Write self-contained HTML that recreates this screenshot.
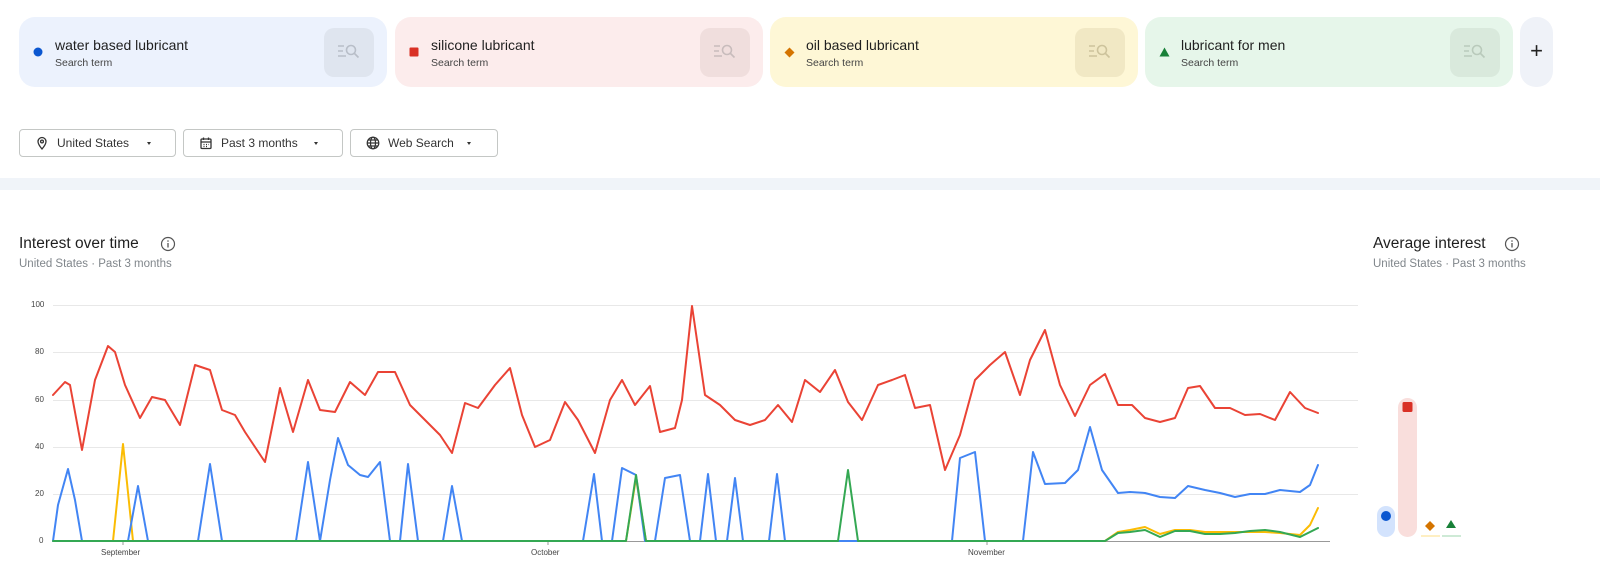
<!DOCTYPE html>
<html><head><meta charset="utf-8"><style>
*{box-sizing:border-box;margin:0;padding:0}
body{width:1600px;height:587px;background:#fff;font-family:"Liberation Sans",Arial,sans-serif;position:relative;overflow:hidden;color:#1f1f1f}
.card{position:absolute;top:17px;height:70px;width:368px;border-radius:16px}
.card .t{position:absolute;left:36px;top:20px;font-size:14px;color:#1f1f1f}
.card .s{position:absolute;left:36px;top:40px;font-size:10.5px;color:#444}
.card .mk{position:absolute;left:14px;top:30px}
.card .ib{position:absolute;right:13px;top:11px;width:50px;height:49px;border-radius:10px}
.card .ib svg{position:absolute;left:13px;top:13px}
.plus{position:absolute;left:1520px;top:17px;width:33px;height:70px;border-radius:16px;background:#eff2f8;font-size:22px;text-align:center;line-height:68px;color:#222}
.f{position:absolute;top:129px;height:28px;border:1px solid #c4c7c5;border-radius:4px;font-size:12px;color:#333;line-height:26px}
.f svg{position:absolute;left:15px;top:6px}
.f span{position:absolute;left:37px}
.f i{position:absolute;top:12px;width:0;height:0;border-left:2.5px solid transparent;border-right:2.5px solid transparent;border-top:3.5px solid #333}
.band{position:absolute;left:0;top:178px;width:1600px;height:12px;background:#f0f4f9}
h2{position:absolute;font-size:15.5px;font-weight:normal;color:#1f1f1f}
.sub{position:absolute;font-size:11.5px;color:#80868b}
.ax{position:absolute;font-size:8px;color:#444}
</style></head><body>

<div class="card" style="left:19px;background:#ecf2fd"><svg class="mk" width="10" height="10"><circle cx="5" cy="5" r="4.5" fill="#0b57d0"/></svg><div class="t">water based lubricant</div><div class="s">Search term</div><div class="ib" style="background:#dfe5ef"><svg width="24" height="22" viewBox="0 0 24 22" fill="none" stroke="#b8bec8" stroke-width="1.6"><path d="M1 5h6M1 10h5M1 15h8"/><circle cx="14" cy="9" r="4.5"/><path d="M17.5 12.5l4 4"/></svg></div></div>
<div class="card" style="left:395px;background:#fcecec"><svg class="mk" width="10" height="10"><rect x="0.5" y="0.5" width="9" height="9" rx="1" fill="#d93025"/></svg><div class="t">silicone lubricant</div><div class="s">Search term</div><div class="ib" style="background:#f0dedd"><svg width="24" height="22" viewBox="0 0 24 22" fill="none" stroke="#c8bcbc" stroke-width="1.6"><path d="M1 5h6M1 10h5M1 15h8"/><circle cx="14" cy="9" r="4.5"/><path d="M17.5 12.5l4 4"/></svg></div></div>
<div class="card" style="left:770px;background:#fef7d6"><svg class="mk" width="11" height="11"><path d="M5.5 0.5L10.5 5.5L5.5 10.5L0.5 5.5Z" fill="#d47400"/></svg><div class="t">oil based lubricant</div><div class="s">Search term</div><div class="ib" style="background:#f1e8c4"><svg width="24" height="22" viewBox="0 0 24 22" fill="none" stroke="#cdc39c" stroke-width="1.6"><path d="M1 5h6M1 10h5M1 15h8"/><circle cx="14" cy="9" r="4.5"/><path d="M17.5 12.5l4 4"/></svg></div></div>
<div class="card" style="left:1145px;background:#e6f6ea"><svg class="mk" width="11" height="10"><path d="M5.5 0.5L10.5 9.5H0.5Z" fill="#188038"/></svg><div class="t">lubricant for men</div><div class="s">Search term</div><div class="ib" style="background:#d9e9dc"><svg width="24" height="22" viewBox="0 0 24 22" fill="none" stroke="#b9cabb" stroke-width="1.6"><path d="M1 5h6M1 10h5M1 15h8"/><circle cx="14" cy="9" r="4.5"/><path d="M17.5 12.5l4 4"/></svg></div></div>
<div class="plus">+</div>

<div class="f" style="left:19px;width:157px"><svg width="14" height="14" viewBox="0 0 14 14" fill="none" stroke="#333" stroke-width="1.3"><path d="M7 13C4 9.5 3 7.5 3 5.5a4 4 0 018 0c0 2-1 4-4 7.5z"/><circle cx="7" cy="5.5" r="1.4"/></svg><span>United States</span><i style="left:127px"></i></div>
<div class="f" style="left:183px;width:160px"><svg width="14" height="14" viewBox="0 0 14 14" fill="none" stroke="#333" stroke-width="1.3"><rect x="2" y="3" width="10" height="9.5" rx="1"/><path d="M2 6h10M4.5 1.5v2.5M9.5 1.5v2.5M4.5 8.5h1M7 8.5h1M9.5 8.5h0.5M4.5 10.5h1M7 10.5h1"/></svg><span>Past 3 months</span><i style="left:130px"></i></div>
<div class="f" style="left:350px;width:148px"><svg width="14" height="14" viewBox="0 0 14 14" fill="none" stroke="#333" stroke-width="1.2"><circle cx="7" cy="7" r="5.8"/><ellipse cx="7" cy="7" rx="2.5" ry="5.8"/><path d="M1.2 7h11.6M2 4h10M2 10h10"/></svg><span>Web Search</span><i style="left:116px"></i></div>

<div class="band"></div>

<h2 style="left:19px;top:235px">Interest over time</h2>
<svg style="position:absolute;left:160px;top:236px" width="16" height="16" viewBox="0 0 16 16"><circle cx="8" cy="8" r="6.5" fill="none" stroke="#555" stroke-width="1.2"/><path d="M8 7v4.5" stroke="#555" stroke-width="1.3"/><circle cx="8" cy="5" r="0.8" fill="#555"/></svg>
<div class="sub" style="left:19px;top:258px">United States · Past 3 months</div>
<h2 style="left:1373px;top:235px">Average interest</h2>
<svg style="position:absolute;left:1504px;top:236px" width="16" height="16" viewBox="0 0 16 16"><circle cx="8" cy="8" r="6.5" fill="none" stroke="#555" stroke-width="1.2"/><path d="M8 7v4.5" stroke="#555" stroke-width="1.3"/><circle cx="8" cy="5" r="0.8" fill="#555"/></svg>
<div class="sub" style="left:1373px;top:258px">United States · Past 3 months</div>

<div class="ax" style="left:31px;top:300px">100</div>
<div class="ax" style="left:35px;top:347px">80</div>
<div class="ax" style="left:35px;top:395px">60</div>
<div class="ax" style="left:35px;top:442px">40</div>
<div class="ax" style="left:35px;top:489px">20</div>
<div class="ax" style="left:39px;top:536px">0</div>
<div class="ax" style="left:101px;top:548px">September</div>
<div class="ax" style="left:531px;top:548px">October</div>
<div class="ax" style="left:968px;top:548px">November</div>

<svg style="position:absolute;left:0;top:0" width="1600" height="587">
<g stroke="#e8e8e8" stroke-width="1"><path d="M53 305.5H1358M53 352.5H1358M53 400.5H1358M53 447.5H1358M53 494.5H1358"/></g>
<path d="M53 541.5H1330" stroke="#999" stroke-width="1"/>
<path d="M123 541v4M548 541v4M987 541v4" stroke="#999"/>
<g fill="none" stroke-width="2" stroke-linejoin="round" stroke-linecap="round">
<polyline stroke="#fbbc04" points="53,541 113,541 123,444 133,541 626,541 636,478 646,541 1105,541 1118,532 1130,530 1145,527 1160,534 1175,530 1190,530 1205,532 1220,532 1235,532 1250,532 1265,532 1280,533 1300,535 1310,525 1318,508"/>
<polyline stroke="#4285f4" points="53,541 58,505 68,469 75,500 82,541 128,541 138,486 148,541 198,541 210,464 222,541 296,541 308,462 320,541 330,480 338,438 348,465 360,475 368,477 380,462 390,541 400,541 408,464 418,541 443,541 452,486 462,541 583,541 594,474 602,541 612,541 622,468 636,475 645,541 655,541 665,478 680,475 690,541 700,541 708,474 716,541 727,541 735,478 743,541 769,541 777,474 785,541 952,541 960,458 975,452 985,541 1023,541 1033,452 1045,484 1065,483 1078,470 1090,427 1102,470 1118,493 1130,492 1145,493 1160,497 1175,498 1188,486 1205,490 1220,493 1235,497 1250,494 1265,494 1280,490 1300,492 1310,485 1318,465"/>
<polyline stroke="#34a853" points="53,541 626,541 636,475 646,541 838,541 848,470 858,541 1105,541 1118,533 1130,532 1145,530 1160,537 1175,531 1190,531 1205,534 1220,534 1235,533 1250,531 1265,530 1280,532 1300,537 1318,528"/>
<polyline stroke="#ea4335" points="53,395 65,382 70,385 82,450 95,380 108,346 115,352 125,385 140,418 152,397 165,400 180,425 195,365 210,370 222,410 235,415 245,432 265,462 280,388 293,432 308,380 320,410 335,412 350,382 365,395 378,372 395,372 410,405 425,420 440,435 452,453 465,403 478,408 495,385 510,368 522,415 535,447 550,440 565,402 578,420 595,453 610,400 622,380 635,405 650,386 660,432 675,428 682,400 692,306 705,395 720,405 735,420 750,425 765,420 778,405 792,422 805,380 820,392 835,370 848,402 862,420 878,385 892,380 905,375 915,408 930,405 945,470 960,435 975,380 990,365 1005,352 1020,395 1030,360 1045,330 1060,385 1075,416 1090,385 1105,374 1118,405 1132,405 1145,418 1160,422 1175,418 1188,388 1200,386 1215,408 1230,408 1245,415 1260,414 1275,420 1290,392 1305,408 1318,413"/>
</g>
<rect x="1377" y="506" width="18" height="31" rx="9" fill="#d3e3fd"/>
<circle cx="1386" cy="516" r="5" fill="#0b57d0"/>
<rect x="1398" y="398" width="19" height="139" rx="9.5" fill="#f9dedc"/>
<rect x="1402.5" y="402" width="10" height="10" rx="1.5" fill="#d93025"/>
<path d="M1430 521l5 5-5 5-5-5z" fill="#d47400"/>
<rect x="1421" y="535" width="19" height="2" fill="#feefc3"/>
<path d="M1451 520l5 8h-10z" fill="#188038"/>
<rect x="1442" y="535" width="19" height="2" fill="#ceead6"/>
</svg>
</body></html>
